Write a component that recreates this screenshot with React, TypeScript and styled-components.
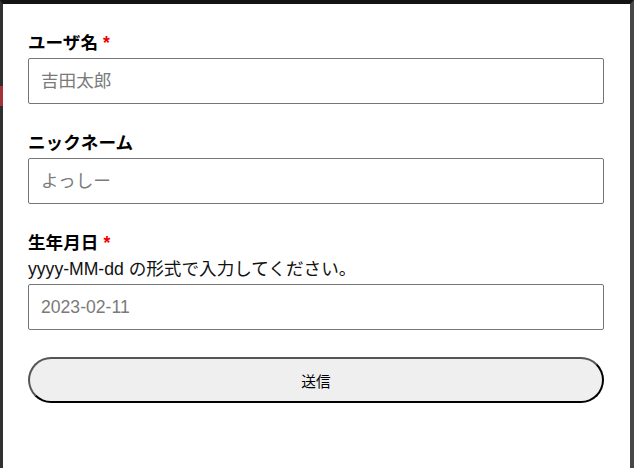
import React from 'react';
import styled, {createGlobalStyle} from "styled-components";

const GlobalStyle = createGlobalStyle`
    * {
        box-sizing: border-box;
    }

    html, body {
        margin: 0;
        padding: 0;
        background: #2e2e2e;
        font-family: "Liberation Sans", "Noto Sans CJK JP", Arial, sans-serif;
    }
`

type FieldPropsType = {
    label: string,
    required?: boolean,
    help?: string,
    placeholder: string
}

const Field = (props: FieldPropsType) => {
    return (
        <StyledField>
            <Label>
                {props.label}
                {props.required && <Required>*</Required>}
            </Label>
            {props.help && <Help>{props.help}</Help>}
            <Input placeholder={props.placeholder}/>
        </StyledField>
    );
};

export default function App() {
    return (
        <>
            <GlobalStyle/>
            <Backdrop>
                <BehindMark/>
                <Dialog>
                    <Form onSubmit={(e) => e.preventDefault()}>
                        <Field label="ユーザ名" required placeholder="吉田太郎"/>
                        <Field label="ニックネーム" placeholder="よっしー"/>
                        <Field
                            label="生年月日"
                            required
                            help="yyyy-MM-dd の形式で入力してください。"
                            placeholder="2023-02-11"
                        />
                        <SubmitButton type="submit">送信</SubmitButton>
                    </Form>
                </Dialog>
            </Backdrop>
        </>
    );
}


const Backdrop = styled.div`
    position: relative;
    display: flex;
    width: 634px;
    height: 468px;
    border-top: 4px solid #131313;
    border-left: 3px solid #303030;
    border-right: 4px solid #474747;
`

const BehindMark = styled.div`
    position: absolute;
    left: -3px;
    top: 82px;
    width: 3px;
    height: 20px;
    background: #a3323b;
`

const Dialog = styled.div`
    flex: 1;
    background: #ffffff;
    padding: 27px 26px 0 25px;
`

const Form = styled.form`
    display: flex;
    flex-direction: column;
    gap: 27px;
`

const StyledField = styled.div`
    display: flex;
    flex-direction: column;
    gap: 3px;
`

const Label = styled.label`
    display: flex;
    align-items: center;
    gap: 5px;
    font-size: 17.6px;
    line-height: 24px;
    font-weight: bold;
    color: #000000;
`

const Required = styled.span`
    color: #ee0000;
    font-weight: bold;
`

const Help = styled.p`
    margin: 0;
    font-size: 17.6px;
    line-height: 23px;
    color: #111111;
`

const Input = styled.input`
    width: 100%;
    height: 46px;
    margin: 0;
    padding: 0 12px;
    border: 1px solid #767676;
    border-radius: 2px;
    font-family: inherit;
    font-size: 17.6px;
    color: #000000;
    background: #ffffff;

    &::placeholder {
        color: #7a7a7a;
    }
`

const SubmitButton = styled.button`
    width: 100%;
    height: 46px;
    margin: 0;
    border-radius: 23px;
    border: 2px solid;
    border-color: #555555 #000000 #000000 #555555;
    background: #efefef;
    font-family: inherit;
    font-size: 14.7px;
    color: #000000;
    cursor: pointer;
`
